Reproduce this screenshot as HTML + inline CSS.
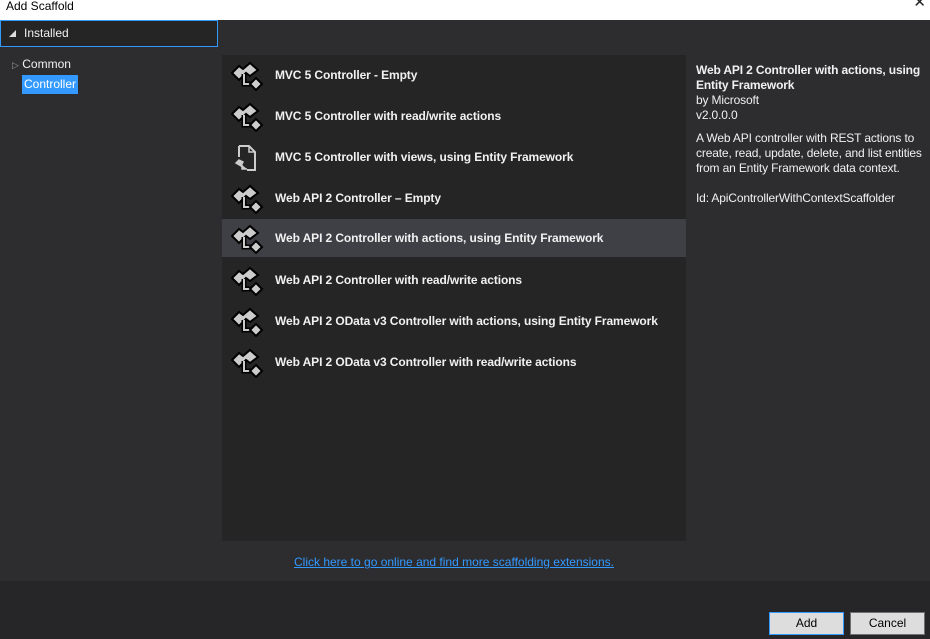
<!DOCTYPE html>
<html><head><meta charset="utf-8"><style>
*{margin:0;padding:0;box-sizing:border-box}
body{width:930px;height:639px;overflow:hidden;background:#2d2d30;font-family:"Liberation Sans",sans-serif;font-size:12px;color:#f1f1f1;position:relative}
.title{position:absolute;left:0;top:0;width:930px;height:20px;background:#fff;color:#000;font-size:12px;padding:0 0 0 6px;line-height:12px}
.x{position:absolute;right:4px;top:-3px;font-size:15px;color:#222}
.inst{position:absolute;left:0;top:20px;width:218px;height:27px;border:1px solid #3399ff;background:#252526;line-height:25px;padding-left:8px}
.tri{display:inline-block;width:0;height:0;border-left:7px solid transparent;border-bottom:7px solid #ddd;margin-right:8px;vertical-align:0px}
.tree{position:absolute;left:12px;top:55px;line-height:19px}
.sel{background:#3399ff;color:#fff;padding:0 2px;display:inline-block;margin-left:10px}
.list{position:absolute;left:222px;top:55px;width:464px;height:486px;background:#252526}
.row{position:absolute;left:0;width:464px;height:37px;font-weight:bold;line-height:39px;padding-left:53px;font-size:12px;letter-spacing:-0.1px}
.row.s{background:#3f3f46}
.row svg{position:absolute;left:9px;top:5px}
.det{position:absolute;left:696px;top:63px;width:234px;line-height:15px;font-size:12px;letter-spacing:-0.15px}
.link{position:absolute;left:294px;top:555px;color:#3399ff;text-decoration:underline}
.foot{position:absolute;left:0;top:581px;width:930px;height:58px;background:#262628}
.btn{position:absolute;top:612px;width:75px;height:23px;background:#dddddd;color:#000;border:1px solid #707070;text-align:center;line-height:21px}
</style></head><body>
<div class="title">Add Scaffold<span class="x">✕</span></div>
<div class="inst"><span class="tri"></span>Installed</div>
<div class="tree"><div><span style="color:#999;font-size:9px">▷</span> Common</div><div><span class="sel">Controller</span></div></div>
<div class="list">
<div class="row" style="top:1px"><svg width="34" height="30" viewBox="0 0 34 30"><g stroke="#000" stroke-width="2" fill="#ccc"><path d="M1 12 L8 5 L12 8 L19 2 L27 9 L19 15 L15 12 L8 19 Z"/><path d="M13 13 V23 H21" fill="none" stroke="#000" stroke-width="5"/><path d="M13 13 V23 H21" fill="none" stroke="#ccc" stroke-width="2"/><path d="M19 23 L25 17 L31 23 L25 29 Z"/></g></svg>MVC 5 Controller - Empty</div>
<div class="row" style="top:42px"><svg width="34" height="30" viewBox="0 0 34 30"><g stroke="#000" stroke-width="2" fill="#ccc"><path d="M1 12 L8 5 L12 8 L19 2 L27 9 L19 15 L15 12 L8 19 Z"/><path d="M13 13 V23 H21" fill="none" stroke="#000" stroke-width="5"/><path d="M13 13 V23 H21" fill="none" stroke="#ccc" stroke-width="2"/><path d="M19 23 L25 17 L31 23 L25 29 Z"/></g></svg>MVC 5 Controller with read/write actions</div>
<div class="row" style="top:83px"><svg width="32" height="30" viewBox="0 0 32 30"><path d="M8 3 H18 L24 9 V27 H16 M8 3 V14" fill="none" stroke="#ccc" stroke-width="2"/><path d="M18 3 V9 H24" fill="none" stroke="#ccc" stroke-width="1.5"/><path d="M5 20 L8 17 L12 19 L10 23 Z M11 22 V26 H16" fill="#ccc" stroke="#ccc" stroke-width="1.5"/></svg>MVC 5 Controller with views, using Entity Framework</div>
<div class="row" style="top:124px"><svg width="34" height="30" viewBox="0 0 34 30"><g stroke="#000" stroke-width="2" fill="#ccc"><path d="M1 12 L8 5 L12 8 L19 2 L27 9 L19 15 L15 12 L8 19 Z"/><path d="M13 13 V23 H21" fill="none" stroke="#000" stroke-width="5"/><path d="M13 13 V23 H21" fill="none" stroke="#ccc" stroke-width="2"/><path d="M19 23 L25 17 L31 23 L25 29 Z"/></g></svg>Web API 2 Controller – Empty</div>
<div class="row s" style="top:164px;height:38px"><svg width="34" height="30" viewBox="0 0 34 30"><g stroke="#000" stroke-width="2" fill="#ccc"><path d="M1 12 L8 5 L12 8 L19 2 L27 9 L19 15 L15 12 L8 19 Z"/><path d="M13 13 V23 H21" fill="none" stroke="#000" stroke-width="5"/><path d="M13 13 V23 H21" fill="none" stroke="#ccc" stroke-width="2"/><path d="M19 23 L25 17 L31 23 L25 29 Z"/></g></svg>Web API 2 Controller with actions, using Entity Framework</div>
<div class="row" style="top:206px"><svg width="34" height="30" viewBox="0 0 34 30"><g stroke="#000" stroke-width="2" fill="#ccc"><path d="M1 12 L8 5 L12 8 L19 2 L27 9 L19 15 L15 12 L8 19 Z"/><path d="M13 13 V23 H21" fill="none" stroke="#000" stroke-width="5"/><path d="M13 13 V23 H21" fill="none" stroke="#ccc" stroke-width="2"/><path d="M19 23 L25 17 L31 23 L25 29 Z"/></g></svg>Web API 2 Controller with read/write actions</div>
<div class="row" style="top:247px"><svg width="34" height="30" viewBox="0 0 34 30"><g stroke="#000" stroke-width="2" fill="#ccc"><path d="M1 12 L8 5 L12 8 L19 2 L27 9 L19 15 L15 12 L8 19 Z"/><path d="M13 13 V23 H21" fill="none" stroke="#000" stroke-width="5"/><path d="M13 13 V23 H21" fill="none" stroke="#ccc" stroke-width="2"/><path d="M19 23 L25 17 L31 23 L25 29 Z"/></g></svg>Web API 2 OData v3 Controller with actions, using Entity Framework</div>
<div class="row" style="top:288px"><svg width="34" height="30" viewBox="0 0 34 30"><g stroke="#000" stroke-width="2" fill="#ccc"><path d="M1 12 L8 5 L12 8 L19 2 L27 9 L19 15 L15 12 L8 19 Z"/><path d="M13 13 V23 H21" fill="none" stroke="#000" stroke-width="5"/><path d="M13 13 V23 H21" fill="none" stroke="#ccc" stroke-width="2"/><path d="M19 23 L25 17 L31 23 L25 29 Z"/></g></svg>Web API 2 OData v3 Controller with read/write actions</div>
</div>
<div class="det"><b>Web API 2 Controller with actions, using Entity Framework</b><br>by Microsoft<br>v2.0.0.0<div style="margin-top:8px">A Web API controller with REST actions to create, read, update, delete, and list entities from an Entity Framework data context.</div><div style="margin-top:15px">Id: ApiControllerWithContextScaffolder</div></div>
<div class="foot"></div>
<div class="link">Click here to go online and find more scaffolding extensions.</div>
<div class="btn" style="left:769px;border-color:#3399ff">Add</div>
<div class="btn" style="left:850px">Cancel</div>
</body></html>
